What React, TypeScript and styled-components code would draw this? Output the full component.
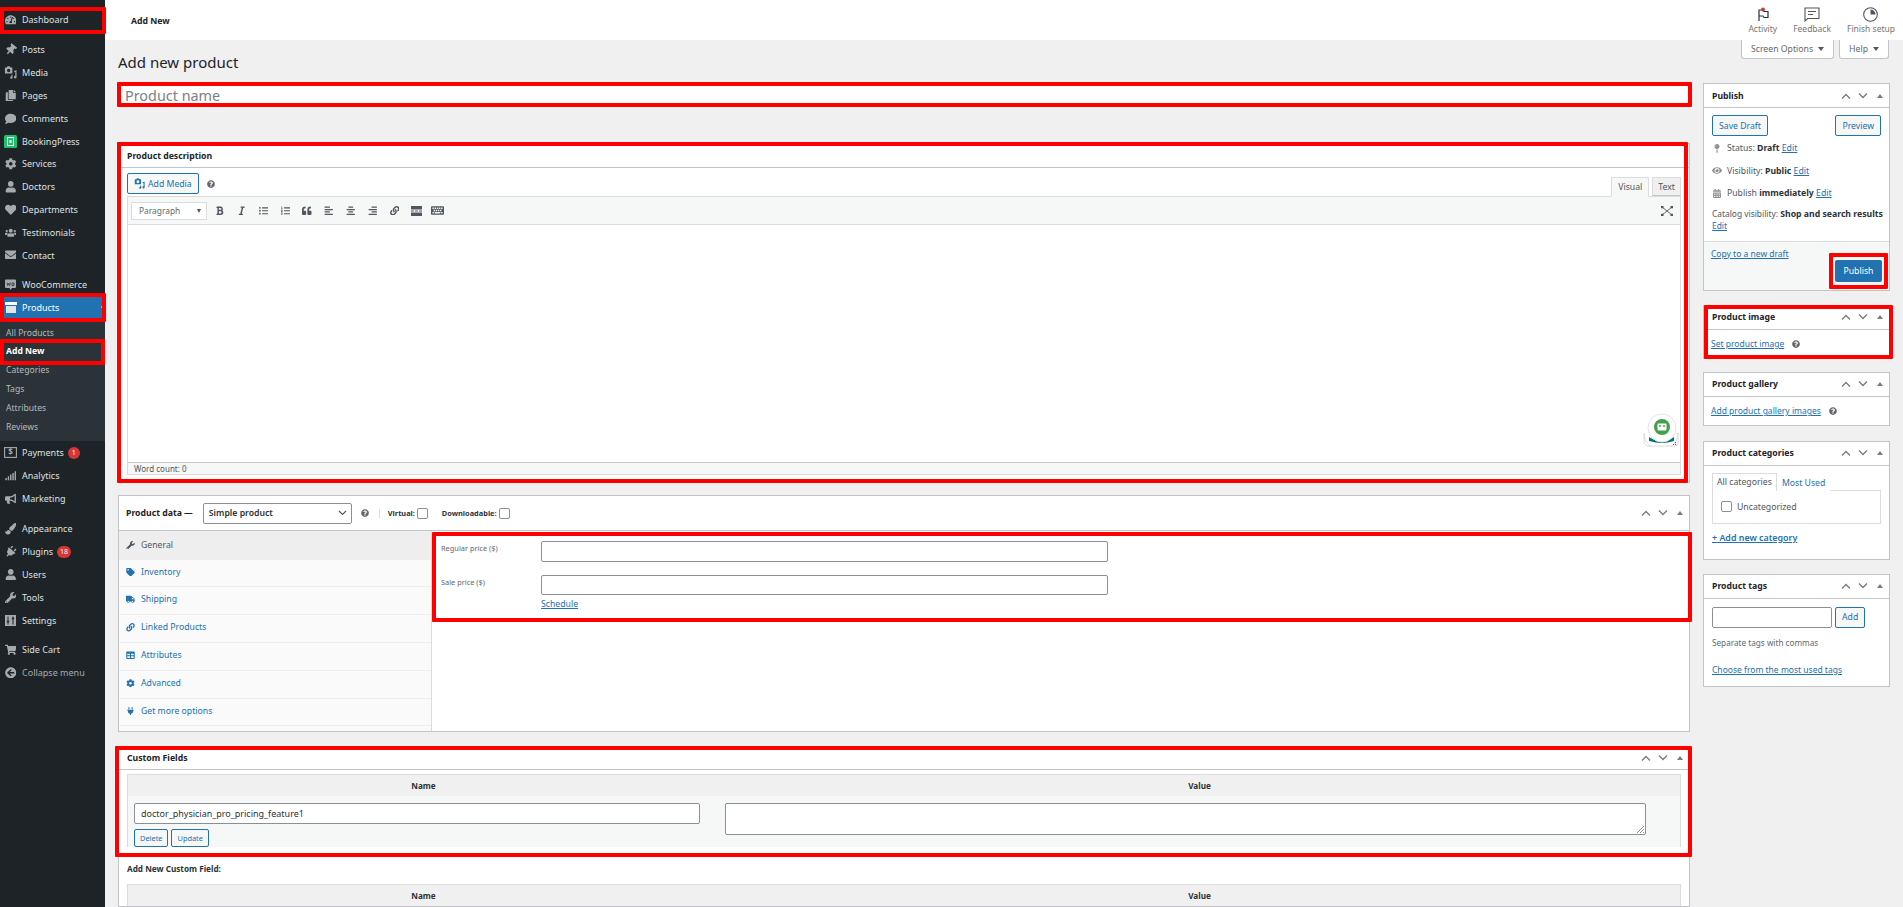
import React from "react";
import styled, { createGlobalStyle } from "styled-components";
import {
  FaTachometerAlt, FaThumbtack, FaCopy, FaComment, FaCog, FaUser, FaHeart, FaUsers, FaEnvelope,
  FaBold, FaItalic, FaListUl, FaListOl, FaQuoteLeft, FaAlignLeft, FaAlignCenter, FaAlignRight, FaLink,
  FaKeyboard, FaWrench, FaTag, FaTruck, FaCalendarAlt, FaEye, FaMapPin, FaQuestionCircle, FaShoppingCart,
  FaSignal, FaBullhorn, FaPaintBrush, FaPlug, FaArrowCircleLeft, FaTable,
} from "react-icons/fa";

const GlobalStyle = createGlobalStyle`
  html, body { margin: 0; height: 100%; overflow: hidden; background: #f0f0f1; }
  body { font-family: "Noto Sans", "Open Sans", sans-serif; font-size: 8.7px; color: #3c434a; }
  * { box-sizing: border-box; }
  a { color: #2271b1; }
`;

const Page = styled.div`
  display: flex;
  height: 100vh;
  overflow: hidden;
`;

/* red annotation frame drawn on top of a part */
const Mark = styled.span<{ $inset?: string }>`
  position: absolute;
  inset: ${(p) => p.$inset || "0"};
  border: 4px solid #f00;
  border-radius: 1px;
  pointer-events: none;
  z-index: 5;
`;

const Sidebar = styled.nav`
  width: 105px;
  flex: none;
  background: #1d2327;
  padding-top: 8px;
`;

const MenuItem = styled.div<{ $gap?: number; $active?: boolean; $dim?: boolean }>`
  position: relative;
  height: 22.8px;
  margin-top: ${(p) => p.$gap || 0}px;
  display: flex;
  align-items: center;
  font-size: 9px;
  color: ${(p) => (p.$active ? "#fff" : p.$dim ? "#a7aaad" : "#dfe1e3")};
  background: ${(p) => (p.$active ? "#2271b1" : "transparent")};
  svg { color: ${(p) => (p.$active ? "#fff" : "#a7aaad")}; }
`;

const MenuIcon = styled.span<{ $tilt?: number }>`
  width: 21px;
  margin-right: 1px;
  flex: none;
  display: flex;
  justify-content: center;
  font-size: 11.5px;
  svg { transform: rotate(${(p) => p.$tilt || 0}deg); }
`;

const MenuNotch = styled.span`
  position: absolute;
  right: 0;
  top: 7px;
  border: 4px solid transparent;
  border-right-color: #f0f0f1;
  border-left: 0;
`;

const Badge = styled.span`
  margin-left: 4px;
  background: #d63638;
  color: #fff;
  border-radius: 6px;
  min-width: 12px;
  padding: 0 3px;
  height: 12px;
  line-height: 12px;
  font-size: 7px;
  text-align: center;
`;

const Submenu = styled.div`
  background: #2c3338;
  padding: 4.4px 0 5px;
`;

const SubItem = styled.div<{ $current?: boolean }>`
  position: relative;
  height: 18.8px;
  line-height: 18.8px;
  padding-left: 6px;
  font-size: 8.6px;
  color: ${(p) => (p.$current ? "#fff" : "#b4b9be")};
  font-weight: ${(p) => (p.$current ? 700 : 400)};
`;

const Content = styled.div`
  position: relative;
  flex: 1;
  min-width: 0;
`;

const TopBar = styled.header`
  height: 40px;
  background: #fff;
  display: flex;
  align-items: center;
  justify-content: space-between;
  padding: 0 8px 0 26px;
`;

const TopTitle = styled.div`
  padding-top: 1px;
  font-size: 8.7px;
  font-weight: 700;
  color: #1d2327;
`;

const TopActions = styled.div`
  display: flex;
  gap: 16px;
`;

const TopAction = styled.div`
  display: flex;
  flex-direction: column;
  align-items: center;
  gap: 1px;
  color: #757575;
  font-size: 8.5px;
  line-height: 11px;
  svg { display: block; }
`;

const ScreenTabs = styled.div`
  position: absolute;
  top: 40px;
  right: 14px;
  display: flex;
  gap: 5px;
`;

const ScreenTab = styled.div`
  height: 19px;
  padding: 0 9px;
  display: flex;
  align-items: center;
  gap: 5px;
  background: #fff;
  border: 1px solid #c3c4c7;
  border-top: 0;
  border-radius: 0 0 3px 3px;
  color: #646970;
  font-size: 8.7px;
  &::after {
    content: "";
    border: 3px solid transparent;
    border-top: 4px solid #50575e;
    border-bottom: 0;
  }
`;

const Body = styled.main`
  padding: 10px 13px 0;
`;

const Heading = styled.h1`
  margin: 0 0 9px;
  height: 24px;
  line-height: 24px;
  font-size: 15px;
  font-weight: 400;
  color: #1d2327;
`;

const Columns = styled.div`
  display: flex;
  gap: 13px;
  align-items: flex-start;
`;

const MainColumn = styled.div`
  width: 1572px;
  flex: none;
`;

const SideColumn = styled.aside`
  width: 187px;
  flex: none;
`;

const NameField = styled.div`
  position: relative;
  width: 1574px;
  height: 24px;
  background: #fff;
  padding-left: 7px;
  display: flex;
  align-items: center;
  font-size: 14.4px;
  color: #7c8186;
  margin-bottom: 36px;
`;

const Panel = styled.section<{ $gap?: number }>`
  position: relative;
  background: #fff;
  border: 1px solid #c3c4c7;
  margin-bottom: ${(p) => (p.$gap === undefined ? 13 : p.$gap)}px;
`;

const PanelHead = styled.div<{ $h?: number }>`
  height: ${(p) => p.$h || 23}px;
  border-bottom: 1px solid #c3c4c7;
  display: flex;
  align-items: center;
  justify-content: space-between;
  padding: 0 3px 0 8px;
  box-sizing: content-box;
`;

const PanelTitle = styled.h2`
  margin: 0;
  font-size: 8.7px;
  font-weight: 700;
  color: #1d2327;
`;

const Handles = styled.div`
  display: flex;
  gap: 5px;
  align-items: center;
  color: #787c82;
  svg { display: block; }
`;

function HandleIcons() {
  return (
    <Handles>
      <svg width="12" height="8" viewBox="0 0 12 8"><path d="M2 6.500 6 2.500l4 4" fill="none" stroke="currentColor" strokeWidth="1.400" /></svg>
      <svg width="12" height="8" viewBox="0 0 12 8"><path d="M2 1.500 6 5.500l4-4" fill="none" stroke="currentColor" strokeWidth="1.400" /></svg>
      <svg width="12" height="8" viewBox="0 0 12 8"><path d="M3 6h6L6 2z" fill="currentColor" /></svg>
    </Handles>
  );
}

/* camera and music note, the media library glyph */
function MediaIcon({ size = 11 }: { size?: number }) {
  return (
    <svg width={size} height={size} viewBox="0 0 14 14" fill="currentColor">
      <path fillRule="evenodd" d="M1 1.500h2l.8-1.200h2.400L7 1.500h2v6.500H1zM5 3a1.800 1.800 0 1 0 0 3.600A1.800 1.800 0 0 0 5 3z" />
      <path d="M10.500 5.500l3-.8v7.300a1.400 1.400 0 1 1-1.300-1.400V6.400l-.6.200zM9.200 9.500v3a1.300 1.300 0 1 1-1.200-1.300V9.500z" />
    </svg>
  );
}

const EditorArea = styled.div`
  position: relative;
  padding: 5px 8px 7px;
`;

const EditorTop = styled.div`
  display: flex;
  justify-content: space-between;
  align-items: flex-end;
  height: 23px;
`;

const MediaRow = styled.div`
  display: flex;
  align-items: center;
  gap: 8px;
  align-self: flex-start;
`;

const OutlineButton = styled.span<{ $small?: boolean }>`
  display: inline-flex;
  align-items: center;
  justify-content: center;
  gap: 3px;
  height: ${(p) => (p.$small ? 18 : 21)}px;
  padding: 0 ${(p) => (p.$small ? 5 : 6)}px;
  border: 1px solid #2271b1;
  border-radius: 2px;
  background: #f6f7f7;
  color: #2271b1;
  font-size: ${(p) => (p.$small ? 7.4 : 8.7)}px;
`;

const PrimaryButton = styled.span`
  position: relative;
  display: flex;
  align-items: center;
  justify-content: center;
  width: 47px;
  height: 22px;
  margin-left: auto;
  background: #2271b1;
  border-radius: 2px;
  color: #fff;
  font-size: 8.7px;
`;

const ModeTabs = styled.div`
  display: flex;
  gap: 3px;
`;

const ModeTab = styled.span<{ $on?: boolean }>`
  height: ${(p) => (p.$on ? 20 : 19)}px;
  margin-bottom: ${(p) => (p.$on ? -1 : 0)}px;
  padding: 0 ${(p) => (p.$on ? 6 : 5)}px;
  display: flex;
  align-items: center;
  border: 1px solid #dcdcde;
  background: ${(p) => (p.$on ? "#f6f7f7" : "#f0f0f1")};
  border-bottom-color: ${(p) => (p.$on ? "#f6f7f7" : "#c3c4c7")};
  color: #50575e;
  font-size: 8.7px;
  position: relative;
  z-index: 1;
`;

const EditorFrame = styled.div`
  position: relative;
  border: 1px solid #dcdcde;
`;

const Toolbar = styled.div`
  height: 28px;
  background: #f6f7f7;
  border-bottom: 1px solid #dcdcde;
  display: flex;
  align-items: center;
  padding: 0 3px;
  color: #50575e;
`;

const FormatSelect = styled.div`
  width: 76px;
  height: 18px;
  margin-right: 2px;
  background: #fff;
  border: 1px solid #dcdcde;
  display: flex;
  align-items: center;
  justify-content: space-between;
  padding: 0 5px 0 7px;
  color: #646970;
  font-size: 8.4px;
  &::after {
    content: "";
    border: 2.500px solid transparent;
    border-top: 4px solid #50575e;
    border-bottom: 0;
  }
`;

const ToolIcon = styled.span<{ $big?: boolean }>`
  width: 21.800px;
  display: flex;
  justify-content: center;
  font-size: ${(p) => (p.$big ? 13 : 9.5)}px;
`;

const FullScreen = styled.span`
  margin-left: auto;
  margin-right: 4px;
  display: flex;
`;

const EditorBody = styled.div`
  position: relative;
  height: 236.500px;
  background: #fff;
`;

const WordCount = styled.div`
  height: 12.500px;
  line-height: 12px;
  background: #f6f7f7;
  border-top: 1px solid #c3c4c7;
  padding-left: 6px;
  font-size: 8px;
  color: #50575e;
`;

const BotBadge = styled.span`
  position: absolute;
  right: 1px;
  bottom: 12px;
  display: block;
`;

const DataHead = styled.div`
  height: 35px;
  border-bottom: 1px solid #c3c4c7;
  display: flex;
  align-items: center;
  padding: 0 3px 0 7px;
`;

const HeadEnd = styled.span`
  margin-left: auto;
`;

const ProductSelect = styled.div`
  width: 149px;
  height: 21px;
  margin: 0 9px 0 10px;
  border: 1px solid #8c8f94;
  border-radius: 2px;
  display: flex;
  align-items: center;
  justify-content: space-between;
  padding: 0 4px 0 5px;
  font-size: 8.7px;
  font-weight: 600;
  color: #2c3338;
`;

const HelpIcon = styled(FaQuestionCircle)`
  color: #646970;
  font-size: 8px;
  flex: none;
`;

const HeadRule = styled.span`
  width: 1px;
  height: 9px;
  margin: 0 8px 0 10px;
  background: #dcdcde;
`;

const CheckLabel = styled.label`
  display: flex;
  align-items: center;
  gap: 2px;
  margin-right: 14px;
  font-size: 7.400px;
  font-weight: 700;
  color: #2c3338;
`;

const CheckBox = styled.span`
  width: 11px;
  height: 11px;
  border: 1px solid #8c8f94;
  border-radius: 2px;
  background: #fff;
  flex: none;
`;

const DataBody = styled.div`
  display: flex;
  height: 200px;
`;

const DataTabs = styled.ul`
  width: 313px;
  flex: none;
  margin: 0;
  padding: 0;
  list-style: none;
  background: #fafafa;
  border-right: 1px solid #dcdcde;
`;

const DataTab = styled.li<{ $on?: boolean; $h?: number }>`
  height: ${(p) => p.$h || 27.900}px;
  padding: 0 0 ${(p) => (p.$on ? 0 : 2)}px 7px;
  display: flex;
  align-items: center;
  gap: 6px;
  font-size: 8.700px;
  color: ${(p) => (p.$on ? "#50575e" : "#2271b1")};
  background: ${(p) => (p.$on ? "#eee" : "transparent")};
  border-bottom: 1px solid #eee;
  svg { width: 9px; font-size: 8.500px; flex: none; }
`;

const DataFields = styled.div`
  flex: 1;
  min-width: 0;
`;

const PriceBox = styled.div`
  position: relative;
  margin: 1px -2px 0 0;
  height: 90px;
  padding: 9px 0 0 9px;
`;

const PriceRow = styled.div`
  display: flex;
  margin-bottom: 13px;
`;

const PriceLabel = styled.span`
  width: 100px;
  flex: none;
  padding-top: 2px;
  font-size: 7.400px;
  color: #646970;
`;

const TextBox = styled.div<{ $w?: number; $h?: number }>`
  width: ${(p) => (p.$w ? `${p.$w}px` : "100%")};
  height: ${(p) => p.$h || 21}px;
  background: #fff;
  border: 1px solid #8c8f94;
  border-radius: 2px;
  display: flex;
  align-items: center;
  padding-left: 6px;
  font-size: 9px;
  color: #2c3338;
  flex: none;
`;

const ScheduleLink = styled.a`
  display: block;
  margin: -10px 0 0 100px;
  text-decoration: underline;
  font-size: 8.700px;
`;

const FieldsFrame = styled.div`
  position: relative;
  height: 110px;
`;

const FieldsTop = styled.div`
  height: 110px;
  overflow: hidden;
`;

const MetaTable = styled.div<{ $top?: number }>`
  margin: ${(p) => p.$top ?? 4}px 8px 0 8px;
  border: 1px solid #dcdcde;
  border-bottom: 0;
  background: #f6f7f7;
`;

const MetaHead = styled.div`
  height: 21px;
  background: #f0f0f1;
  display: grid;
  grid-template-columns: 591px 1fr;
  align-items: center;
  font-size: 8.200px;
  font-weight: 700;
  color: #2c3338;
  text-align: center;
`;

const MetaRow = styled.div`
  display: grid;
  grid-template-columns: 566px 921px;
  gap: 25px;
  padding: 7px 0 0 6px;
`;

const MetaButtons = styled.div`
  display: flex;
  gap: 3px;
  margin-top: 5px;
`;

const AddFieldTitle = styled.h3`
  margin: 6px 0 10px 8px;
  font-size: 8.200px;
  font-weight: 700;
  color: #2c3338;
`;

const Resizer = styled.svg`
  position: absolute;
  right: 1px;
  bottom: 1px;
`;

const ValueArea = styled(TextBox)`
  position: relative;
`;

const BoxBody = styled.div`
  padding: 7px 8px 0;
`;

const TagBody = styled.div`
  padding: 8px 8px 11px;
`;

const ButtonRow = styled.div`
  display: flex;
  justify-content: space-between;
  margin-bottom: 1px;
`;

const StatusRow = styled.div`
  position: relative;
  display: flex;
  align-items: center;
  height: 22.600px;
  font-size: 8.700px;
  color: #50575e;
  white-space: pre;
  svg { width: 10px; margin: 0 5px 0 0; font-size: 9px; color: #8c8f94; flex: none; }
  b { color: #2c3338; font-weight: 700; }
`;

const CatalogText = styled.div`
  margin-top: 3px;
  line-height: 12.500px;
  font-size: 8.400px;
  color: #50575e;
  white-space: nowrap;
  b { color: #2c3338; font-weight: 700; font-size: 8.700px; }
`;

const PublishFoot = styled.div`
  margin-top: 8px;
  height: 49px;
  background: #f6f7f7;
  border-top: 1px solid #dcdcde;
  padding: 6px 7px;
  font-size: 8.500px;
`;

const FootLink = styled.a`
  display: block;
  height: 12px;
  line-height: 12px;
  text-decoration: underline;
`;

const LinkLine = styled.div`
  display: flex;
  align-items: center;
  gap: 8px;
  height: 28px;
  padding-left: 7px;
  font-size: 8.500px;
`;

const CatTabs = styled.div`
  display: flex;
  align-items: flex-end;
  height: 18px;
  margin: 6px 8px 0;
`;

const CatTab = styled.span<{ $on?: boolean }>`
  height: ${(p) => (p.$on ? 18 : 17)}px;
  padding: 0 4px;
  display: flex;
  align-items: center;
  font-size: 8.700px;
  color: ${(p) => (p.$on ? "#50575e" : "#2271b1")};
  border: 1px solid ${(p) => (p.$on ? "#dcdcde" : "transparent")};
  border-bottom: 0;
  background: #fff;
  margin-bottom: -1px;
  position: relative;
`;

const CatBox = styled.div`
  height: 34px;
  margin: 0 8px;
  border: 1px solid #dcdcde;
  display: flex;
  align-items: center;
  gap: 5px;
  padding-left: 8px;
  font-size: 8.700px;
  color: #50575e;
`;

const CatFoot = styled.div`
  padding: 7px 8px 15px;
`;

const BlockLink = styled.a<{ $bold?: boolean }>`
  display: block;
  font-size: ${(p) => (p.$bold ? 8.9 : 8.5)}px;
  text-decoration: underline;
  font-weight: ${(p) => (p.$bold ? 600 : 400)};
`;

const TagInput = styled.div`
  display: flex;
  gap: 3px;
  align-items: center;
`;

const Hint = styled.p`
  margin: 9px 0 16px;
  font-size: 8.200px;
  color: #646970;
`;

const TextLink = styled.a`
  text-decoration: underline;
`;

const menuMid: [React.ReactNode, string][] = [
  [<FaCog />, "Services"],
  [<FaUser />, "Doctors"],
  [<FaHeart />, "Departments"],
  [<FaUsers />, "Testimonials"],
  [<FaEnvelope />, "Contact"],
];
const subItems = ["All Products", "Add New", "Categories", "Tags", "Attributes", "Reviews"];
const dataTabs: [React.ReactNode, string][] = [
  [<FaTag />, "Inventory"],
  [<FaTruck />, "Shipping"],
  [<FaLink />, "Linked Products"],
  [<FaTable />, "Attributes"],
  [<FaCog />, "Advanced"],
  [<FaPlug />, "Get more options"],
];
const toolIcons = [FaBold, FaItalic, FaListUl, FaListOl, FaQuoteLeft, FaAlignLeft, FaAlignCenter, FaAlignRight, FaLink];

function SideMenu() {
  return (
    <Sidebar>
      <MenuItem>
        <MenuIcon><FaTachometerAlt /></MenuIcon>Dashboard
        <Mark $inset="-1px -1px -3px 0" />
      </MenuItem>
      <MenuItem $gap={7.800}><MenuIcon $tilt={40}><FaThumbtack /></MenuIcon>Posts</MenuItem>
      <MenuItem><MenuIcon><MediaIcon size={13} /></MenuIcon>Media</MenuItem>
      <MenuItem><MenuIcon><FaCopy /></MenuIcon>Pages</MenuItem>
      <MenuItem><MenuIcon><FaComment /></MenuIcon>Comments</MenuItem>
      <MenuItem>
        <MenuIcon>
          <svg width="13" height="13" viewBox="0 0 13 13">
            <rect width="13" height="13" rx="1.500" fill="#1fc16b" />
            <rect x="3.500" y="2.500" width="6" height="8" fill="none" stroke="#fff" />
            <rect x="5.500" y="5" width="2" height="3" fill="#fff" />
          </svg>
        </MenuIcon>
        BookingPress
      </MenuItem>
      {menuMid.map(([icon, label]) => (
        <MenuItem key={label}><MenuIcon>{icon}</MenuIcon>{label}</MenuItem>
      ))}
      <MenuItem $gap={7}>
        <MenuIcon>
          <svg width="13" height="13" viewBox="0 0 13 13">
            <path d="M2 1.500h9a1 1 0 0 1 1 1v6.500a1 1 0 0 1-1 1H8l-1.500 2-1-2H2a1 1 0 0 1-1-1V2.500a1 1 0 0 1 1-1z" fill="#a7aaad" />
            <path d="M3 4.500l.7 3 1-2.200 1 2.200.7-3M8 5h2v2.500H8z" fill="none" stroke="#1d2327" strokeWidth=".7" />
          </svg>
        </MenuIcon>
        WooCommerce
      </MenuItem>
      <MenuItem $active>
        <MenuIcon>
          <svg width="12" height="11" viewBox="0 0 12 11">
            <path d="M0 0h12v3H0z" fill="#fff" />
            <path d="M1 4h10v7H1z" fill="#dfe6ee" />
          </svg>
        </MenuIcon>
        Products
        <MenuNotch />
        <Mark $inset="-3px -1px -3px 0" />
      </MenuItem>
      <Submenu>
        {subItems.map((s) => (
          <SubItem key={s} $current={s === "Add New"}>
            {s}
            {s === "Add New" && <Mark $inset="-3px 0 -4px 0" />}
          </SubItem>
        ))}
      </Submenu>
      <MenuItem>
        <MenuIcon>
          <svg width="13" height="11" viewBox="0 0 13 11">
            <rect x=".6" y=".6" width="11.800" height="9.800" fill="none" stroke="#a7aaad" strokeWidth="1.100" />
            <text x="6.500" y="8.300" fontSize="8" fontWeight="700" fill="#a7aaad" textAnchor="middle">$</text>
          </svg>
        </MenuIcon>
        Payments<Badge>1</Badge>
      </MenuItem>
      <MenuItem><MenuIcon><FaSignal /></MenuIcon>Analytics</MenuItem>
      <MenuItem><MenuIcon><FaBullhorn /></MenuIcon>Marketing</MenuItem>
      <MenuItem $gap={7.800}><MenuIcon><FaPaintBrush /></MenuIcon>Appearance</MenuItem>
      <MenuItem><MenuIcon $tilt={40}><FaPlug /></MenuIcon>Plugins<Badge>18</Badge></MenuItem>
      <MenuItem><MenuIcon><FaUser /></MenuIcon>Users</MenuItem>
      <MenuItem><MenuIcon><FaWrench /></MenuIcon>Tools</MenuItem>
      <MenuItem>
        <MenuIcon>
          <svg width="11" height="11" viewBox="0 0 11 11">
            <rect width="11" height="11" fill="#a7aaad" />
            <path d="M3 1.500v8M8 1.500v8" stroke="#1d2327" />
            <path d="M1.800 6.500h2.400M6.800 3.500h2.400" stroke="#1d2327" strokeWidth="1.400" />
          </svg>
        </MenuIcon>
        Settings
      </MenuItem>
      <MenuItem $gap={7}><MenuIcon><FaShoppingCart /></MenuIcon>Side Cart</MenuItem>
      <MenuItem $dim><MenuIcon><FaArrowCircleLeft /></MenuIcon>Collapse menu</MenuItem>
    </Sidebar>
  );
}

function Description() {
  return (
    <Panel $gap={12}>
      <PanelHead><PanelTitle>Product description</PanelTitle></PanelHead>
      <EditorArea>
        <EditorTop>
          <MediaRow>
            <OutlineButton><MediaIcon />Add Media</OutlineButton>
            <HelpIcon />
          </MediaRow>
          <ModeTabs>
            <ModeTab $on>Visual</ModeTab>
            <ModeTab>Text</ModeTab>
          </ModeTabs>
        </EditorTop>
        <EditorFrame>
          <Toolbar>
            <FormatSelect>Paragraph</FormatSelect>
            {toolIcons.map((Icon, i) => (
              <ToolIcon key={i}><Icon /></ToolIcon>
            ))}
            <ToolIcon>
              <svg width="11" height="10" viewBox="0 0 11 10" fill="#50575e">
                <path d="M0 0h11v3.500H0zM0 6.500h11V10H0zM0 4.500h3v1H0zM4 4.500h3v1H4zM8 4.500h3v1H8z" />
              </svg>
            </ToolIcon>
            <ToolIcon $big><FaKeyboard /></ToolIcon>
            <FullScreen>
              <svg width="12" height="10" viewBox="0 0 12 10">
                <path d="M1 1l10 8M11 1L1 9" stroke="#50575e" strokeWidth=".9" />
                <path d="M0 0h2.500v2.200H0zM9.500 0H12v2.200H9.500zM0 7.800h2.500V10H0zM9.500 7.800H12V10H9.500z" fill="#50575e" />
              </svg>
            </FullScreen>
          </Toolbar>
          <EditorBody>
            <BotBadge>
              <svg width="36" height="34" viewBox="0 0 36 34">
                <path d="M1 20a12 12 0 0 0 34 0v10q0 3-3 3H4l-3-3z" fill="#fff" stroke="#dcdcde" />
                <path d="M6 24q12 8 25 0l0 4q-12 4-25 0z" fill="#00796b" />
                <circle cx="19" cy="15" r="14" fill="#fff" stroke="#e4e4e4" />
                <circle cx="19" cy="14" r="8" fill="#43a047" />
                <rect x="14.500" y="10.500" width="9" height="7" rx="1" fill="#fff" />
                <circle cx="17" cy="13" r="1" fill="#43a047" />
                <circle cx="21" cy="13" r="1" fill="#43a047" />
                <path d="M30 31h1v1h-1zM32 31h1v1h-1zM32 29h1v1h-1z" fill="#50575e" />
              </svg>
            </BotBadge>
          </EditorBody>
          <WordCount>Word count: 0</WordCount>
        </EditorFrame>
      </EditorArea>
      <Mark $inset="-2px 1px -1px -2px" />
    </Panel>
  );
}

function ProductData() {
  return (
    <Panel $gap={14}>
      <DataHead>
        <PanelTitle>Product data —</PanelTitle>
        <ProductSelect>
          Simple product
          <svg width="9" height="6" viewBox="0 0 9 6"><path d="M1 1l3.500 3.500L8 1" fill="none" stroke="#50575e" strokeWidth="1.100" /></svg>
        </ProductSelect>
        <HelpIcon />
        <HeadRule />
        <CheckLabel>Virtual:<CheckBox /></CheckLabel>
        <CheckLabel>Downloadable:<CheckBox /></CheckLabel>
        <HeadEnd><HandleIcons /></HeadEnd>
      </DataHead>
      <DataBody>
        <DataTabs>
          <DataTab $on $h={29}><FaWrench />General</DataTab>
          {dataTabs.map(([icon, label], i) => (
            <DataTab key={label} $h={i === 0 ? 27 : undefined}>{icon}{label}</DataTab>
          ))}
        </DataTabs>
        <DataFields>
          <PriceBox>
            <PriceRow><PriceLabel>Regular price ($)</PriceLabel><TextBox $w={567} /></PriceRow>
            <PriceRow><PriceLabel>Sale price ($)</PriceLabel><TextBox $w={567} $h={20} /></PriceRow>
            <ScheduleLink>Schedule</ScheduleLink>
            <Mark $inset="0 -1px 0 0" />
          </PriceBox>
        </DataFields>
      </DataBody>
    </Panel>
  );
}

function CustomFields() {
  return (
    <Panel $gap={0}>
      <FieldsFrame>
        <FieldsTop>
          <PanelHead $h={22}>
            <PanelTitle>Custom Fields</PanelTitle>
            <HandleIcons />
          </PanelHead>
          <MetaTable>
            <MetaHead><span>Name</span><span>Value</span></MetaHead>
            <MetaRow>
              <div>
                <TextBox>doctor_physician_pro_pricing_feature1</TextBox>
                <MetaButtons>
                  <OutlineButton $small>Delete</OutlineButton>
                  <OutlineButton $small>Update</OutlineButton>
                </MetaButtons>
              </div>
              <ValueArea $h={32}>
                <Resizer width="8" height="8" viewBox="0 0 8 8">
                  <path d="M1 8l7-7M4 8l4-4M7 8l1-1" stroke="#646970" strokeWidth=".7" />
                </Resizer>
              </ValueArea>
            </MetaRow>
          </MetaTable>
        </FieldsTop>
        <Mark $inset="-1px -3px 0 -4px" />
      </FieldsFrame>
      <AddFieldTitle>Add New Custom Field:</AddFieldTitle>
      <MetaTable $top={0}>
        <MetaHead><span>Name</span><span>Value</span></MetaHead>
      </MetaTable>
    </Panel>
  );
}

function SideBoxes() {
  return (
    <SideColumn>
      <Panel $gap={14}>
        <PanelHead><PanelTitle>Publish</PanelTitle><HandleIcons /></PanelHead>
        <BoxBody>
          <ButtonRow>
            <OutlineButton>Save Draft</OutlineButton>
            <OutlineButton>Preview</OutlineButton>
          </ButtonRow>
          <StatusRow><FaMapPin /><span>Status: <b>Draft</b> <TextLink>Edit</TextLink></span></StatusRow>
          <StatusRow><FaEye /><span>Visibility: <b>Public</b> <TextLink>Edit</TextLink></span></StatusRow>
          <StatusRow><FaCalendarAlt /><span>Publish <b>immediately</b> <TextLink>Edit</TextLink></span></StatusRow>
          <CatalogText>
            Catalog visibility: <b>Shop and search results</b><br />
            <TextLink>Edit</TextLink>
          </CatalogText>
        </BoxBody>
        <PublishFoot>
          <FootLink>Copy to a new draft</FootLink>
          <PrimaryButton>
            Publish
            <Mark $inset="-7px -6px -7px -6px" />
          </PrimaryButton>
        </PublishFoot>
      </Panel>
      <Panel $gap={13}>
        <PanelHead><PanelTitle>Product image</PanelTitle><HandleIcons /></PanelHead>
        <LinkLine><TextLink>Set product image</TextLink><HelpIcon /></LinkLine>
        <Mark $inset="-1px -4px -1px 0" />
      </Panel>
      <Panel $gap={15}>
        <PanelHead><PanelTitle>Product gallery</PanelTitle><HandleIcons /></PanelHead>
        <LinkLine><TextLink>Add product gallery images</TextLink><HelpIcon /></LinkLine>
      </Panel>
      <Panel $gap={14}>
        <PanelHead><PanelTitle>Product categories</PanelTitle><HandleIcons /></PanelHead>
        <CatTabs>
          <CatTab $on>All categories</CatTab>
          <CatTab>Most Used</CatTab>
        </CatTabs>
        <CatBox><CheckBox />Uncategorized</CatBox>
        <CatFoot>
          <BlockLink $bold>+ Add new category</BlockLink>
        </CatFoot>
      </Panel>
      <Panel>
        <PanelHead><PanelTitle>Product tags</PanelTitle><HandleIcons /></PanelHead>
        <TagBody>
          <TagInput>
            <TextBox $w={120} />
            <OutlineButton>Add</OutlineButton>
          </TagInput>
          <Hint>Separate tags with commas</Hint>
          <BlockLink>Choose from the most used tags</BlockLink>
        </TagBody>
      </Panel>
    </SideColumn>
  );
}

export default function App() {
  return (
    <Page>
      <GlobalStyle />
      <SideMenu />
      <Content>
        <TopBar>
          <TopTitle>Add New</TopTitle>
          <TopActions>
            <TopAction>
              <svg width="14" height="15" viewBox="0 0 14 15">
                <path d="M3 14V3h4l1 1.500h4v6H8l-1-1.500H3" fill="none" stroke="#2c3338" strokeWidth="1.200" />
                <circle cx="7" cy="2.500" r="2" fill="#d63638" />
              </svg>
              Activity
            </TopAction>
            <TopAction>
              <svg width="16" height="15" viewBox="0 0 16 15">
                <path d="M1 1h14v10.500H3.500L1 14z" fill="none" stroke="#50575e" strokeWidth="1.100" />
                <path d="M4 4.500h8M4 7.500h5" stroke="#50575e" strokeWidth="1.100" />
              </svg>
              Feedback
            </TopAction>
            <TopAction>
              <svg width="15" height="15" viewBox="0 0 15 15">
                <circle cx="7.500" cy="7.500" r="6.800" fill="none" stroke="#50575e" strokeWidth="1.100" />
                <path d="M7.500 2.500v5h5a5 5 0 0 0-5-5z" fill="#50575e" />
              </svg>
              Finish setup
            </TopAction>
          </TopActions>
        </TopBar>
        <ScreenTabs>
          <ScreenTab>Screen Options</ScreenTab>
          <ScreenTab>Help</ScreenTab>
        </ScreenTabs>
        <Body>
          <Heading>Add new product</Heading>
          <Columns>
            <MainColumn>
              <NameField>
                Product name
                <Mark $inset="-1px 0 0 -1px" />
              </NameField>
              <Description />
              <ProductData />
              <CustomFields />
            </MainColumn>
            <SideBoxes />
          </Columns>
        </Body>
      </Content>
    </Page>
  );
}
